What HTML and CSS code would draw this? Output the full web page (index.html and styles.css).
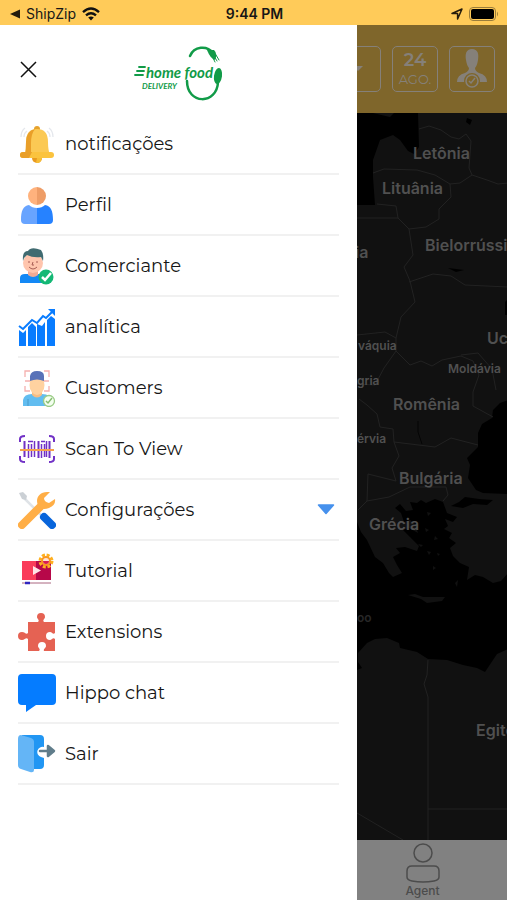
FILE: index.html
```html
<!DOCTYPE html>
<html lang="pt">
<head>
    <meta charset="UTF-8">
    <meta name="viewport" content="width=device-width, initial-scale=1.0">
    <title>Home Food Delivery</title>
    <link rel="stylesheet" href="styles.css">
</head>
<body>
    <header class="status-bar">
        <a class="status-back" href="#">
            <svg width="10" height="10" viewBox="0 0 10 10"><path d="M0 5L10 0.500V9.500Z" fill="#241c0c"/></svg>
            <span>ShipZip</span>
            <svg width="18" height="14" viewBox="0 0 18 14" fill="none" stroke="#111" stroke-width="2.400">
                <path d="M1 5.200Q9-2 17 5.200"/>
                <path d="M4 8.300Q9 4 14 8.300"/>
                <path d="M6.200 10.600Q9 8.300 11.800 10.600L9 13.600Z" fill="#111" stroke="none"/>
            </svg>
        </a>
        <span class="status-time">9:44 PM</span>
        <span class="status-icons">
            <svg width="12" height="12" viewBox="0 0 12 12"><path d="M1 5.500L11 1L6.600 11V5.600Z" fill="none" stroke="#241c0c" stroke-width="1.500" stroke-linejoin="round"/></svg>
            <svg width="30" height="14" viewBox="0 0 30 14">
                <rect x="0.500" y="0.500" width="26" height="13" rx="3.500" fill="none" stroke="#9b7d3b"/>
                <rect x="2" y="2" width="23" height="10" rx="2" fill="#000"/>
                <path d="M28 4.500Q30 7 28 9.500Z" fill="#9b7d3b"/>
            </svg>
        </span>
    </header>

    <div class="screen">
        <aside class="drawer">
            <div class="drawer-header">
                <button class="close-button" aria-label="Fechar">
                    <svg width="17" height="17" viewBox="0 0 17 17"><path d="M1 1L16 16M16 1L1 16" stroke="#111" stroke-width="1.500"/></svg>
                </button>
                <svg class="logo" width="90" height="62" viewBox="133 39 90 62">
                    <g fill="none" stroke="#119b48" stroke-linecap="round">
                        <path d="M189 56C193 46 206 45 212 53" stroke-width="2.500"/>
                        <path d="M186 81C186 105 216 105 217 82" stroke-width="2.500"/>
                        <path d="M138 67H144M136 71H143M134 75H142" stroke-width="1.800"/>
                        <path d="M212 54L216 61M215 55L218 60M211 56L214 62" stroke-width="1"/>
                    </g>
                    <ellipse cx="217" cy="76" rx="4" ry="8" fill="#119b48" transform="rotate(8 217 76)"/>
                    <path d="M206 50L213 50Q217 54 214 60Q209 58 206 50Z" fill="#119b48"/>
                    <text class="logo-name" x="145" y="78">home food</text>
                    <text class="logo-sub" x="141" y="89">DELIVERY</text>
                </svg>
            </div>

            <nav>
                <ul class="menu">
                    <li><a class="menu-item" href="#">
                        <svg class="menu-icon" viewBox="0 0 38 38">
                            <path d="M3 12Q3 6 7 3M6 12Q6 8 9 6M35 12Q35 6 31 3M32 12Q32 8 29 6" fill="none" stroke="#e4e7ec" stroke-width="1.300"/>
                            <circle cx="19" cy="33" r="5" fill="#e89a20"/>
                            <path d="M19 33h5a5 5 0 0 1-6 5z" fill="#f7bd35"/>
                            <circle cx="19" cy="4" r="3" fill="#e6a22c"/>
                            <path d="M7 30Q8 25 8 17Q8 4 19 4Q30 4 30 17Q30 25 32 30Z" fill="#fbc954"/>
                            <path d="M7 30Q8 25 8 17Q8 6 17 4Q13 9 13 18V30Z" fill="#e99f29"/>
                            <rect x="2" y="27" width="34" height="6" rx="3" fill="#fbc33e"/>
                            <path d="M5 27H14L11 33H5A3 3 0 0 1 5 27Z" fill="#e99f29"/>
                        </svg>
                        <span>notificações</span>
                    </a></li>
                    <li><a class="menu-item" href="#">
                        <svg class="menu-icon" viewBox="0 0 38 38">
                            <path d="M19 1A9 9 0 0 0 19 19Z" fill="#ffb27d"/>
                            <path d="M19 1A9 9 0 0 1 19 19Z" fill="#ee9d67"/>
                            <path d="M19 22Q14 22 11 19C5 20 3 25 3 34Q3 38 7 38H19Z" fill="#68a4ff"/>
                            <path d="M19 22Q24 22 27 19C33 20 35 25 35 34Q35 38 31 38H19Z" fill="#2682ff"/>
                        </svg>
                        <span>Perfil</span>
                    </a></li>
                    <li><a class="menu-item" href="#">
                        <svg class="menu-icon" viewBox="0 0 38 38">
                            <path d="M2 36V31Q2 27 7 27H24V36Z" fill="#1388f5"/>
                            <path d="M10 22H20V28Q15 32 10 28Z" fill="#f2aa94"/>
                            <ellipse cx="15" cy="16" rx="10" ry="10" fill="#ffc5ad"/>
                            <path d="M5 14Q4 4 10 4Q13-1 23 3Q26 7 25 14L23 10Q15 11 9 8Q6 10 5 14Z" fill="#406b71"/>
                            <path d="M11 14v2M19 14v2M15 15l-1 3h2M11 20Q15 24 19 20" fill="none" stroke="#a85d54" stroke-width="1"/>
                            <circle cx="28" cy="30" r="7.500" fill="#14b875"/>
                            <path d="M24 30L27 33L33 26" fill="none" stroke="#fff" stroke-width="2.500"/>
                        </svg>
                        <span>Comerciante</span>
                    </a></li>
                    <li><a class="menu-item" href="#">
                        <svg class="menu-icon" viewBox="0 0 38 38" fill="#087cff">
                            <path d="M1 22L5 25L8 22V38H1ZM10 19L14 15L18 19V38H10ZM19 16L24 18L27 14V38H19ZM29 12L33 8L37 11V38H29Z"/>
                            <path d="M1 18L5 21L14 12L19 15L25 8L28 10L34 4" fill="none" stroke="#087cff" stroke-width="2"/>
                            <path d="M30 1H37V8Z"/>
                        </svg>
                        <span>analítica</span>
                    </a></li>
                    <li><a class="menu-item" href="#">
                        <svg class="menu-icon" viewBox="0 0 38 38">
                            <path d="M7 8V2H12M26 2H31V8M7 17V22H12M26 22H31V17M7 12H31" fill="none" stroke="#f5b0ae" stroke-width="1.300"/>
                            <path d="M5 37V31Q6 25 14 25H24Q33 25 33 32V37Z" fill="#62bdf0"/>
                            <path d="M14 20H24V26Q19 31 14 26Z" fill="#f8bd83"/>
                            <ellipse cx="19" cy="16" rx="7.500" ry="10" fill="#ffd2a0"/>
                            <path d="M12 12V7Q13 2 19 2Q26 2 26 7V12Q19 9 12 12Z" fill="#5872b8"/>
                            <path d="M10 30V37" stroke="#489ac9" stroke-width="1"/>
                            <circle cx="31" cy="32" r="5.500" fill="#f4fff0" stroke="#9acb86" stroke-width="1.300"/>
                            <path d="M28 32L30 34L34 29" fill="none" stroke="#87be71" stroke-width="1.500"/>
                        </svg>
                        <span>Customers</span>
                    </a></li>
                    <li><a class="menu-item" href="#">
                        <svg class="menu-icon" viewBox="0 0 38 38" fill="none" stroke="#7131c6">
                            <path d="M2 12V9Q2 6 7 6M31 6Q36 6 36 9V12M2 26V29Q2 32 7 32M31 32Q36 32 36 29V26" stroke-width="2"/>
                            <path d="M6.500 11V27M20.500 11V28M31.500 11V28" stroke-width="2"/>
                            <path d="M10.500 14V28M13.500 14V27M16.500 11V27M23.500 14V28M26.500 14V27M28.500 11V27" stroke-width="1.500"/>
                            <path d="M10 11.500H15M23 11.500H27" stroke-width="1.500"/>
                            <path d="M2 20H36" stroke="#f6a14b" stroke-width="2"/>
                        </svg>
                        <span>Scan To View</span>
                    </a></li>
                    <li><button class="menu-item" aria-expanded="false">
                        <svg class="menu-icon" viewBox="0 0 38 38">
                            <path d="M5 6L24 25" stroke="#dfe3e7" stroke-width="2.500"/>
                            <path d="M1 2L5 1L9 5L8 9L4 8Z" fill="#cbd0d5"/>
                            <path d="M26 26L34 34" stroke="#0865db" stroke-width="8" stroke-linecap="round"/>
                            <path d="M4 34L24 14" stroke="#ffae46" stroke-width="8" stroke-linecap="round"/>
                            <path d="M29 1C21 1 17 8 20 14Q23 20 31 17Q38 14 37 8L31 12Q26 11 26 7L32 1Z" fill="#ffae46"/>
                        </svg>
                        <span>Configurações</span>
                        <svg class="caret" width="18" height="11" viewBox="0 0 18 11"><path d="M1.500 1H16.500L9 9.500Z" fill="#4691ed" stroke="#4691ed" stroke-width="1.500" stroke-linejoin="round"/></svg>
                    </button></li>
                    <li><a class="menu-item" href="#">
                        <svg class="menu-icon" viewBox="0 0 38 38">
                            <path d="M4 9H19V28H4Z" fill="#fa3c5b"/>
                            <path d="M18 9H33V28H18Z" fill="#b70849"/>
                            <path d="M15 14L23 18.500L15 23Z" fill="#ffe4e7"/>
                            <path d="M4 31H33" stroke="#aa6680" stroke-width="1"/>
                            <path d="M7 31H12" stroke="#3026bf" stroke-width="2.500"/>
                            <circle cx="28" cy="9" r="6" fill="none" stroke="#ffb11f" stroke-width="3" stroke-dasharray="3 1.700"/>
                            <circle cx="28" cy="9" r="4" fill="#ffe2d4" stroke="#f99821" stroke-width="2"/>
                            <path d="M25 9H31A3 3 0 0 1 25 9Z" fill="#d91c50"/>
                        </svg>
                        <span>Tutorial</span>
                    </a></li>
                    <li><a class="menu-item" href="#">
                        <svg class="menu-icon" viewBox="0 0 38 38">
                            <path d="M10 9H20C22 7 19 6 19 4A4 4 0 0 1 27 4C27 6 24 7 26 9H37V20C35 22 34 19 32 19A4 4 0 0 0 32 27C34 27 35 24 37 26V38H26C25 36 28 35 28 33A4 4 0 0 0 20 33C20 35 23 36 21 38H10V26C8 24 7 27 4 27A4 4 0 0 1 4 19C7 19 8 22 10 20Z" fill="#e56253"/>
                        </svg>
                        <span>Extensions</span>
                    </a></li>
                    <li><a class="menu-item" href="#">
                        <svg class="menu-icon" viewBox="0 0 38 38"><path d="M4 0H34Q38 0 38 4V27Q38 31 34 31H18L8 38V31H4Q0 31 0 27V4Q0 0 4 0Z" fill="#057cff"/></svg>
                        <span>Hippo chat</span>
                    </a></li>
                    <li><a class="menu-item" href="#">
                        <svg class="menu-icon" viewBox="0 0 38 38">
                            <path d="M4 0H22Q26 0 26 4V12A5 5 0 0 0 23 22L26 23V30Q26 34 22 34H4Z" fill="#2196f3"/>
                            <path d="M3 0L13 3Q16 4 16 7V35Q16 38 12 37L3 34Q0 33 0 30V4Q0 0 3 0Z" fill="#64b5f6"/>
                            <path d="M22 16H30M30 11L36 16L30 21Z" fill="#607d8b" stroke="#607d8b" stroke-width="2.500" stroke-linejoin="round" stroke-linecap="round"/>
                        </svg>
                        <span>Sair</span>
                    </a></li>
                </ul>
            </nav>
        </aside>

        <main class="backdrop">
            <div class="toolbar">
                <button class="tool-button" aria-label="Filtro">
                    <svg width="10" height="6" viewBox="0 0 10 6"><path d="M0 0H10L5 5Z" fill="#858079"/></svg>
                </button>
                <button class="tool-button">
                    <span class="date-day">24</span>
                    <span class="date-month">AGO.</span>
                </button>
                <button class="tool-button" aria-label="Agente">
                    <svg width="32" height="40" viewBox="0 0 32 40">
                        <path d="M16 0C10 0 9 5 10 11Q11 17 13 19Q13 22 9 24Q1 26 1 33H31Q31 26 23 24Q19 22 19 19Q21 17 22 11C23 5 22 0 16 0Z" fill="#858079"/>
                        <circle cx="16" cy="32" r="7" fill="#7f662b" stroke="#7f662b" stroke-width="2"/>
                        <circle cx="16" cy="32" r="6" fill="none" stroke="#858079" stroke-width="1.500"/>
                        <path d="M13 32L15 34L19 29" fill="none" stroke="#858079" stroke-width="1.500"/>
                    </svg>
                </button>
            </div>

            <div class="map">
                <svg width="100%" height="100%" viewBox="0 0 151 727" preserveAspectRatio="xMinYMin slice">
                    <!-- seas -->
                    <g fill="#000">
                        <path d="M0 0H16L33 4L37 0H61L62 34L57 41L51 38L43 27L36 22L23 27L16 47V64L18 92H0Z"/>
                        <path d="M151 287L143 290L136 297L135 305L125 311L121 320V334L110 345L113 352L111 365L119 377L126 380L151 381Z"/>
                        <path d="M0 409L4 419L10 427L18 444L26 450L32 460L36 464L45 460L40 452L36 444L43 440L39 435L48 434L60 438L62 433L53 424L46 417L52 415L61 420L58 411L53 407L47 409L44 400L38 395L43 391L49 398L56 397L53 389L60 390L64 387L69 390L78 386L86 389L90 400L100 404L96 409L88 406L91 413L87 416L95 420L92 425L99 430L93 435L96 443L103 450L112 454L110 467L118 462L126 464L136 470L144 468L151 460V536L140 541L128 559L120 555L106 552L90 547L71 546L60 539L43 535L42 530L30 525L18 526L10 530L1 540V549L5 555L0 557Z"/>
                        <path d="M94 393L102 389L108 384L122 386L136 387L130 392L116 391L106 395ZM110 5L115 7L113 12L109 9ZM91 155L107 157L99 159ZM148 189V202H151V186Z"/>
                    </g>
                    <g fill="#111">
                        <path d="M51 482L58 481L66 484H88L85 488L70 490L64 486Z"/>
                        <path d="M68 415l4 2l-3 2zM78 423l3 3l-4 1zM70 438l4 1l-2 3zM80 440l3 1l-2 2zM76 453l3 2l-3 2zM98 470l3-3l-1 7zM70 399l4 1l-3 3zM61 431l5 1l-2 2z"/>
                    </g>
                    <!-- borders -->
                    <g fill="none" stroke="#222" stroke-width="1">
                        <path d="M62 16L72 13L84 17L94 24L102 26L109 21L114 28L112 55L115 62L130 67L141 71L151 70"/>
                        <path d="M16 60L27 56L60 57L78 62L93 71L103 70L115 62M93 71L94 84L82 96V106L69 114L52 116L41 105H0M20 91L39 93L41 105M52 116L56 142L47 154L53 168L58 189L44 204L39 225L28 219L0 222M52 169L76 161L94 163L108 172L151 174"/>
                        <path d="M39 225L39 238L53 252L64 248L75 253L85 247L104 243L116 248L122 262L116 279L116 293L136 304M104 242L121 240L135 256L139 277M0 271L18 272L27 255L39 238M2 286L10 292L20 301L23 314L36 316L37 329L78 334L94 325L121 332M37 329L42 343L35 355L39 368L11 361L10 388L1 397M10 388L32 384L53 374L89 374L91 382L86 388"/>
                        <path d="M71 547L70 562L67 571L71 584V727M71 696H151M0 700L46 727"/>
                    </g>
                    <path d="M61 308V319L65 331" stroke="#050505" fill="none"/>
                    <g class="map-labels">
                        <text x="56" y="46">Letônia</text>
                        <text x="25" y="81">Lituânia</text>
                        <text x="68" y="138">Bielorrússia</text>
                        <text x="-2" y="145">ia</text>
                        <text x="130" y="231">Ucrânia</text>
                        <text x="36" y="297">Romênia</text>
                        <text x="42" y="371">Bulgária</text>
                        <text x="12" y="417">Grécia</text>
                        <text x="119" y="623">Egito</text>
                        <text class="map-label-small" x="1" y="237">váquia</text>
                        <text class="map-label-small" x="91" y="260">Moldávia</text>
                        <text class="map-label-small" x="0" y="272">gria</text>
                        <text class="map-label-small" x="0" y="330">érvia</text>
                        <text class="map-label-faint" x="0" y="509">oo</text>
                    </g>
                </svg>
            </div>

            <nav class="tab-bar">
                <a class="tab" href="#">
                    <svg width="36" height="42" viewBox="0 0 36 42" fill="none" stroke="#4c4c4c" stroke-width="1.500">
                        <circle cx="18" cy="11" r="9"/>
                        <path d="M7 24H29Q34 24 34 29V35Q34 38 29 39Q18 41 7 39Q2 38 2 35V29Q2 24 7 24Z"/>
                    </svg>
                    <span>Agent</span>
                </a>
            </nav>
        </main>
    </div>
</body>
</html>
```
FILE: styles.css
```css
* {
    box-sizing: border-box;
}

body {
    margin: 0;
    min-height: 100vh;
    display: flex;
    flex-direction: column;
    font-family: Montserrat, Inter, sans-serif;
    color: #161616;
    background-color: #fff;
}

a {
    color: inherit;
    text-decoration: none;
}

button {
    font: inherit;
    color: inherit;
    background: none;
    border: none;
    padding: 0;
    cursor: pointer;
}

svg {
    display: block;
    flex-shrink: 0;
}

/* status bar */
.status-bar {
    display: grid;
    grid-template-columns: 1fr auto 1fr;
    align-items: center;
    height: 25px;
    padding: 2px 8px 0 10px;
    background-color: #ffcb59;
    font-family: Inter, sans-serif;
    font-size: 14px;
}

.status-back,
.status-icons {
    display: flex;
    align-items: center;
    gap: 6px;
}

.status-time {
    font-weight: 600;
}

.status-icons {
    justify-content: flex-end;
}

.screen {
    flex: 1;
    display: grid;
    grid-template-columns: 357fr 150fr;
}

/* drawer */
.drawer {
    background-color: #fff;
}

.drawer-header {
    display: grid;
    grid-template-columns: 1fr auto 1fr;
    align-items: center;
    height: 89px;
    padding: 0 20px;
}

.close-button {
    justify-self: start;
}

.logo-name,
.logo-sub {
    font-family: Lato, sans-serif;
    font-style: italic;
    font-weight: 700;
    fill: #119b48;
}

.logo-name {
    font-size: 15px;
}

.logo-sub {
    font-size: 8px;
}

.menu {
    list-style: none;
    margin: 0;
    padding: 0 18px;
}

.menu-item {
    display: flex;
    align-items: center;
    gap: 9px;
    width: 100%;
    height: 61px;
    border-bottom: 2px solid #f1f1f1;
    font-size: 18px;
    text-align: left;
}

.menu-icon {
    width: 38px;
    height: 38px;
}

.caret {
    margin-left: auto;
    margin-right: 4px;
}

/* dimmed page behind the drawer */
.backdrop {
    display: flex;
    flex-direction: column;
    min-width: 0;
    overflow: hidden;
    background-color: #111;
}

.toolbar {
    display: flex;
    justify-content: flex-end;
    align-items: center;
    gap: 11px;
    height: 88px;
    padding: 0 12px;
    background-color: #7f662b;
}

.tool-button {
    flex-shrink: 0;
    display: flex;
    flex-direction: column;
    align-items: center;
    justify-content: center;
    width: 46px;
    height: 46px;
    border: 1px solid #858079;
    border-radius: 5px;
    color: #858079;
}

.date-day {
    font-size: 18px;
    font-weight: 600;
    line-height: 20px;
}

.date-month {
    font-size: 13px;
    line-height: 18px;
}

.map {
    flex: 1;
    min-height: 0;
    overflow: hidden;
}

.map-labels {
    font-family: Inter, sans-serif;
    font-size: 16px;
    font-weight: 600;
    fill: #505050;
}

.map-label-small {
    font-size: 12px;
}

.map-label-faint {
    font-size: 12px;
    fill: #272727;
}

.tab-bar {
    display: flex;
    justify-content: flex-end;
    height: 60px;
    background-color: #818181;
}

.tab {
    flex-shrink: 0;
    display: flex;
    flex-direction: column;
    align-items: center;
    justify-content: center;
    width: 33.33vw;
    color: #4c4c4c;
    font-family: Inter, sans-serif;
    font-size: 12px;
    font-weight: 500;
    line-height: 14px;
}
```
